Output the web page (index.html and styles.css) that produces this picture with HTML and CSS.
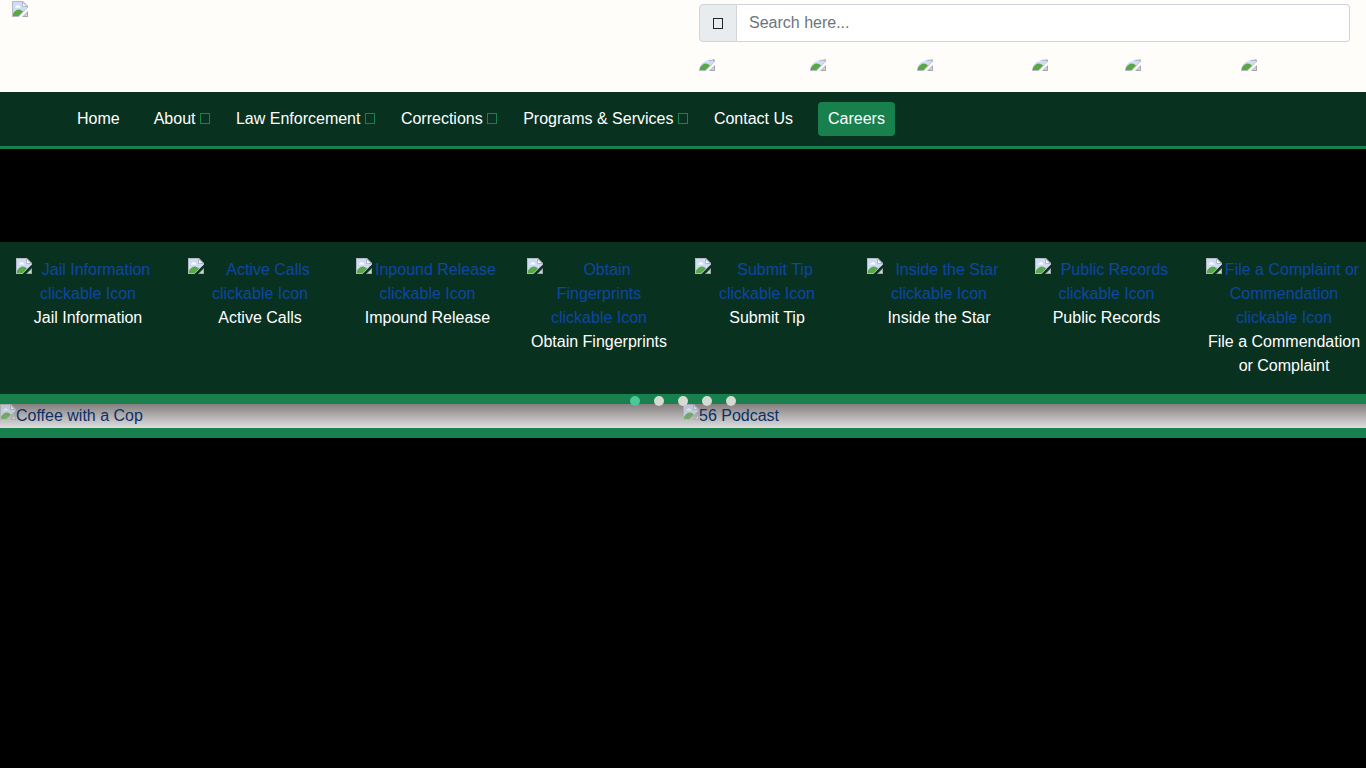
FILE: index.html
```html
<!DOCTYPE html>
<html lang="en">
<head>
  <meta charset="UTF-8">
  <meta name="viewport" content="width=device-width, initial-scale=1">
  <title>Sheriff's Office</title>
  <link rel="stylesheet" href="styles.css">
</head>
<body>
<svg class="symbols" aria-hidden="true">
  <symbol id="picture" viewBox="0 0 16 16">
    <path d="M0 0h11l5 5v1.500L6.500 16H0z" fill="#b4b8c0"/>
    <path d="M1 1h9.500l4.500 4.500v1.500L6.500 15H1z" fill="#cfdcf8"/>
    <path d="M3 6.500q0-1.500 1.500-1.500 1-2 2.500 0 1.500 0 1.500 1.500z" fill="#fff"/>
    <path d="M1 15v-2.500q5-7 10-2L6.500 15z" fill="#58a846"/>
    <path d="M10.500 1v4.500H15z" fill="#fff" stroke="#b4b8c0"/>
    <path d="M10 16l6-6v6z" fill="#a3a7ad"/>
    <path d="M12 15l3-3v3z" fill="#cfdcc8"/>
  </symbol>
</svg>

<header class="top">
  <a class="logo" href="#" aria-label="Home page"><svg class="pic"><use href="#picture"/></svg></a>
  <div class="top-right">
    <form class="search">
      <label for="search" aria-label="Search"><span class="glyph"></span></label>
      <input type="text" id="search" placeholder="Search here...">
    </form>
    <div class="social">
      <a href="#" aria-label="Facebook"><svg class="pic"><use href="#picture"/></svg></a>
      <a href="#" aria-label="Twitter"><svg class="pic"><use href="#picture"/></svg></a>
      <a href="#" aria-label="Instagram"><svg class="pic"><use href="#picture"/></svg></a>
      <a href="#" aria-label="YouTube"><svg class="pic"><use href="#picture"/></svg></a>
      <a href="#" aria-label="LinkedIn"><svg class="pic"><use href="#picture"/></svg></a>
      <a href="#" aria-label="Nextdoor"><svg class="pic"><use href="#picture"/></svg></a>
    </div>
  </div>
</header>

<nav class="menu">
  <a class="plain" href="#">Home</a>
  <a href="#">About <span class="glyph"></span></a>
  <a href="#">Law Enforcement <span class="glyph"></span></a>
  <a href="#">Corrections <span class="glyph"></span></a>
  <a href="#">Programs &amp; Services <span class="glyph"></span></a>
  <a class="plain" href="#">Contact Us</a>
  <a class="careers" href="#">Careers</a>
</nav>

<main>
  <div class="hero"></div>

  <div class="quick-links">
    <a href="#"><span class="alt"><svg class="pic"><use href="#picture"/></svg>Jail Information clickable Icon</span>Jail Information</a>
    <a href="#"><span class="alt"><svg class="pic"><use href="#picture"/></svg>Active Calls clickable Icon</span>Active Calls</a>
    <a href="#"><span class="alt"><svg class="pic"><use href="#picture"/></svg>Inpound Release clickable Icon</span>Impound Release</a>
    <a href="#"><span class="alt"><svg class="pic"><use href="#picture"/></svg>Obtain Fingerprints clickable Icon</span>Obtain Fingerprints</a>
    <a href="#"><span class="alt"><svg class="pic"><use href="#picture"/></svg>Submit Tip clickable Icon</span>Submit Tip</a>
    <a href="#"><span class="alt"><svg class="pic"><use href="#picture"/></svg>Inside the Star clickable Icon</span>Inside the Star</a>
    <a href="#"><span class="alt"><svg class="pic"><use href="#picture"/></svg>Public Records clickable Icon</span>Public Records</a>
    <a href="#"><span class="alt"><svg class="pic"><use href="#picture"/></svg>File a Complaint or Commendation clickable Icon</span>File a Commendation or Complaint</a>
  </div>

  <div class="carousel">
    <div class="slides">
      <a href="#"><svg class="pic"><use href="#picture"/></svg>Coffee with a Cop</a>
      <a href="#"><svg class="pic"><use href="#picture"/></svg>56 Podcast</a>
    </div>
    <div class="dots">
      <button class="active" type="button" aria-label="Slide 1"></button>
      <button type="button" aria-label="Slide 2"></button>
      <button type="button" aria-label="Slide 3"></button>
      <button type="button" aria-label="Slide 4"></button>
      <button type="button" aria-label="Slide 5"></button>
    </div>
  </div>
</main>
</body>
</html>
```
FILE: styles.css
```css
* {
  box-sizing: border-box;
}

body {
  margin: 0;
  background-color: #000;
  font-family: "Liberation Sans", Arial, sans-serif;
  font-size: 16px;
  line-height: 24px;
}

a {
  text-decoration: none;
}

.symbols {
  display: none;
}

.pic {
  display: block;
  width: 16px;
  height: 16px;
}

.glyph {
  display: inline-block;
  width: 10px;
  height: 11px;
  border: 1px solid currentColor;
}

/* header */
.top {
  display: grid;
  grid-template-columns: 1fr 1fr;
  background-color: #fffdfa;
}

.logo {
  padding: 1px 12px;
}

.top-right {
  padding: 4px 16px 21px;
}

.search {
  display: flex;
  height: 38px;
}

.search label {
  display: flex;
  align-items: center;
  justify-content: center;
  width: 38px;
  background-color: #e9ecef;
  border: 1px solid #ced4da;
  border-radius: 4px 0 0 4px;
  color: #212529;
}

.search input {
  flex: 1;
  min-width: 0;
  padding: 6px 12px;
  border: 1px solid #ced4da;
  border-left: 0;
  border-radius: 0 4px 4px 0;
  background-color: #fff;
  font: inherit;
}

.search input::placeholder {
  color: #6c757d;
  opacity: 1;
}

.social {
  display: grid;
  grid-template-columns: 111fr 107fr 115fr 93fr 116fr 109fr;
  margin-top: 17px;
}

.social a {
  display: flex;
  align-items: flex-end;
  width: 16px;
  height: 12px;
  overflow: hidden;
  border-top-left-radius: 16px 12px;
}

.social .pic {
  flex-shrink: 0;
}

/* navigation */
.menu {
  display: flex;
  align-items: center;
  gap: 4px;
  padding: 10px 66px;
  background-color: #093120;
  border-bottom: 3px solid #17804d;
}

.menu a {
  padding: 5px 11px;
  color: #fff;
}

.menu .glyph {
  color: #17804d;
}

.menu .plain {
  margin-right: 8px;
}

.menu .careers {
  margin-left: 2px;
  padding: 5px 10px;
  background-color: #17804d;
  border-radius: 4px;
}

.hero {
  height: 93px;
}

/* quick links */
.quick-links {
  display: grid;
  grid-template-columns: 172fr 168fr 171fr 168fr 172fr 168fr 171fr 176fr;
  padding: 16px 0;
  background-color: #093120;
}

.quick-links a {
  padding: 0 12px 0 16px;
  color: #fff;
  text-align: center;
}

.quick-links a:nth-child(even) {
  padding-right: 8px;
}

.quick-links a:last-child {
  padding-right: 4px;
}

.alt {
  display: block;
  color: #0d47a1;
}

.alt .pic {
  float: left;
}

/* carousel */
.carousel {
  position: relative;
  padding: 10px 0;
  background-color: #17804d;
}

.slides {
  display: grid;
  grid-template-columns: 1fr 1fr;
  background-image: linear-gradient(#857f7f, #dedede);
}

.slides a {
  display: flex;
  color: #0b3068;
}

.slides .pic {
  opacity: 0.7;
}

.dots {
  position: absolute;
  top: 2px;
  left: 0;
  right: 0;
  display: flex;
  justify-content: center;
  gap: 14px;
}

.dots button {
  width: 10px;
  height: 10px;
  padding: 0;
  border: 0;
  border-radius: 50%;
  background-color: #d5dbd3;
  cursor: pointer;
}

.dots .active {
  background-color: #48c997;
}
```
